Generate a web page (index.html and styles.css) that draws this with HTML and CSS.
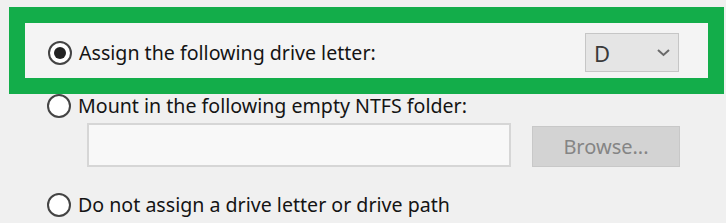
FILE: index.html
```html
<!DOCTYPE html>
<html lang="en">
   <head>
      <meta charset="UTF-8" />
      <title>Assign Drive Letter</title>
      <link rel="stylesheet" href="styles.css">
   </head>
   <body>
      <div class="highlight">
         <label class="option">
            <span class="radio checked"></span>
            <span>Assign the following drive letter:</span>
         </label>
         <div class="drive-select">
            <span>D</span>
            <svg width="15" height="9" viewBox="0 0 15 9">
               <path d="M2 2 L7.5 7 L13 2" fill="none" stroke="#6a6a6a" stroke-width="2"/>
            </svg>
         </div>
      </div>
      <div class="options">
         <label class="option">
            <span class="radio"></span>
            <span>Mount in the following empty NTFS folder:</span>
         </label>
         <div class="folder-row">
            <div class="folder-input"></div>
            <button class="browse" disabled>Browse...</button>
         </div>
         <label class="option last">
            <span class="radio"></span>
            <span>Do not assign a drive letter or drive path</span>
         </label>
      </div>
   </body>
</html>
```

FILE: styles.css
```css
body {
margin: 0;
background-color: #f0f0f0;
font-family: "Noto Sans", "Open Sans", sans-serif;
font-size: 19.6px;
color: #141414;
}
.highlight {
margin: 7px 2px 0 9px;
border: 16px solid #13ad4a;
background-color: #f4f4f4;
height: 51px;
padding: 4px 29px 0 23px;
display: flex;
align-items: center;
}
.option {
display: flex;
align-items: center;
gap: 7px;
line-height: 24px;
}
.radio {
width: 20px;
height: 20px;
border: 2px solid #444;
border-radius: 50%;
background-color: #fff;
display: flex;
align-items: center;
justify-content: center;
flex-shrink: 0;
}
.radio.checked::after {
content: "";
width: 12px;
height: 12px;
border-radius: 50%;
background-color: #222;
}
.drive-select {
margin-left: auto;
box-sizing: border-box;
width: 94px;
height: 39px;
border: 1px solid #c6c6c6;
background-color: #e5e5e5;
display: flex;
align-items: center;
justify-content: space-between;
padding: 0 7px 0 8px;
color: #3a3a3a;
font-size: 22px;
}
.options {
padding-left: 47px;
}
.folder-row {
display: flex;
align-items: flex-end;
gap: 21px;
margin: 5px 0 0 40px;
}
.folder-input {
width: 424px;
height: 44px;
box-sizing: border-box;
border: 2px solid #d6d6d6;
background-color: #f8f8f8;
}
.browse {
width: 148px;
height: 41px;
border: 1px solid #c8c8c8;
background-color: #d3d3d3;
color: #858585;
font-family: inherit;
font-size: 20px;
}
.option.last {
margin-top: 26px;
}
```
